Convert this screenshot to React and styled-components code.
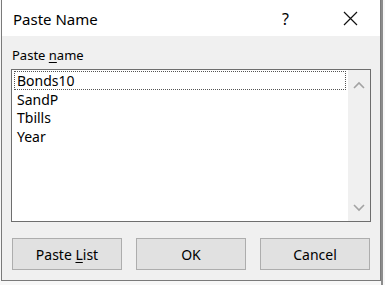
import styled, { createGlobalStyle } from "styled-components";

const GlobalStyle = createGlobalStyle`
  body {
    margin: 0;
    background: #f6f6f6;
    overflow: hidden;
  }
`;

const names = ["Bonds10", "SandP", "Tbills", "Year"];

export default function App() {
  return (
    <Sheet>
      <GlobalStyle />
      <Dialog>
        <TitleBar>
          <Title>Paste Name</Title>
          <Help>?</Help>
          <Close>
            <svg width="15" height="15" viewBox="0 0 15 15">
              <path d="M1 1 L14 14 M14 1 L1 14" stroke="#111" strokeWidth="1.2" fill="none" />
            </svg>
          </Close>
        </TitleBar>

        <Body>
          <Label>
            Paste <u>n</u>ame
          </Label>

          <ListBox>
            <Items>
              {names.map((n, i) => (
                <Item key={n} $focused={i === 0}>
                  {n}
                </Item>
              ))}
            </Items>
            <ScrollBar>
              <svg width="12" height="8" viewBox="0 0 12 8">
                <path d="M1 7 L6 2 L11 7" stroke="#a3a3a3" strokeWidth="1.6" fill="none" />
              </svg>
              <svg width="12" height="8" viewBox="0 0 12 8">
                <path d="M1 1 L6 6 L11 1" stroke="#a3a3a3" strokeWidth="1.6" fill="none" />
              </svg>
            </ScrollBar>
          </ListBox>

          <Buttons>
            <Button>
              Paste <u>L</u>ist
            </Button>
            <Button>OK</Button>
            <Button>Cancel</Button>
          </Buttons>
        </Body>
      </Dialog>
    </Sheet>
  );
}

const Sheet = styled.div`
  width: 385px;
  height: 285px;
  background-color: #f7f7f7;
  background-image: linear-gradient(to right, transparent 381px, #8c8c8c 381px, #8c8c8c 383px, transparent 383px);
  font-family: "Noto Sans", "Open Sans", sans-serif;
  color: #000;
`;

const Dialog = styled.div`
  margin-left: 1px;
  width: 380px;
  height: 281px;
  box-sizing: border-box;
  border: 1px solid #7a7a7a;
  border-top: none;
  background: #f0f0f0;
  display: flex;
  flex-direction: column;
`;

const TitleBar = styled.div`
  height: 36px;
  flex-shrink: 0;
  background: #ffffff;
  display: flex;
  align-items: center;
  padding-left: 11px;
`;

const Title = styled.div`
  font-size: 15px;
  flex: 1;
  margin-top: 1px;
`;

const Help = styled.div`
  font-size: 16px;
  width: 14px;
  margin-right: 47px;
  margin-top: 1px;
`;

const Close = styled.div`
  width: 15px;
  height: 15px;
  margin-right: 22px;
  display: flex;
`;

const Body = styled.div`
  flex: 1;
  display: flex;
  flex-direction: column;
  padding: 11px 9px 10px 9px;
`;

const Label = styled.div`
  font-size: 13px;
  line-height: 17px;
  margin-left: 1px;
  margin-bottom: 5px;

  u {
    text-underline-offset: 2px;
  }
`;

const ListBox = styled.div`
  height: 153px;
  box-sizing: border-box;
  border: 1px solid #6e6e6e;
  background: #ffffff;
  display: flex;
`;

const Items = styled.div`
  flex: 1;
  padding: 1px 2px;
`;

const Item = styled.div`
  height: 18.6px;
  line-height: 18px;
  font-size: 14px;
  padding-left: 2px;
  box-sizing: border-box;
  border: 1px dotted ${(p) => (p.$focused ? "#555" : "transparent")};
`;

const ScrollBar = styled.div`
  width: 22px;
  background: #f0f0f0;
  display: flex;
  flex-direction: column;
  justify-content: space-between;
  align-items: center;
  padding: 11px 0 9px;
`;

const Buttons = styled.div`
  margin-top: 16px;
  padding: 0 1px;
  display: flex;
  justify-content: space-between;
`;

const Button = styled.button`
  width: 110px;
  height: 32px;
  background: #e1e1e1;
  border: 1px solid #adadad;
  border-radius: 0;
  font-family: "Noto Sans", "Open Sans", sans-serif;
  font-size: 14px;
  color: #000;
  padding: 0;

  u {
    text-underline-offset: 2px;
  }
`;
